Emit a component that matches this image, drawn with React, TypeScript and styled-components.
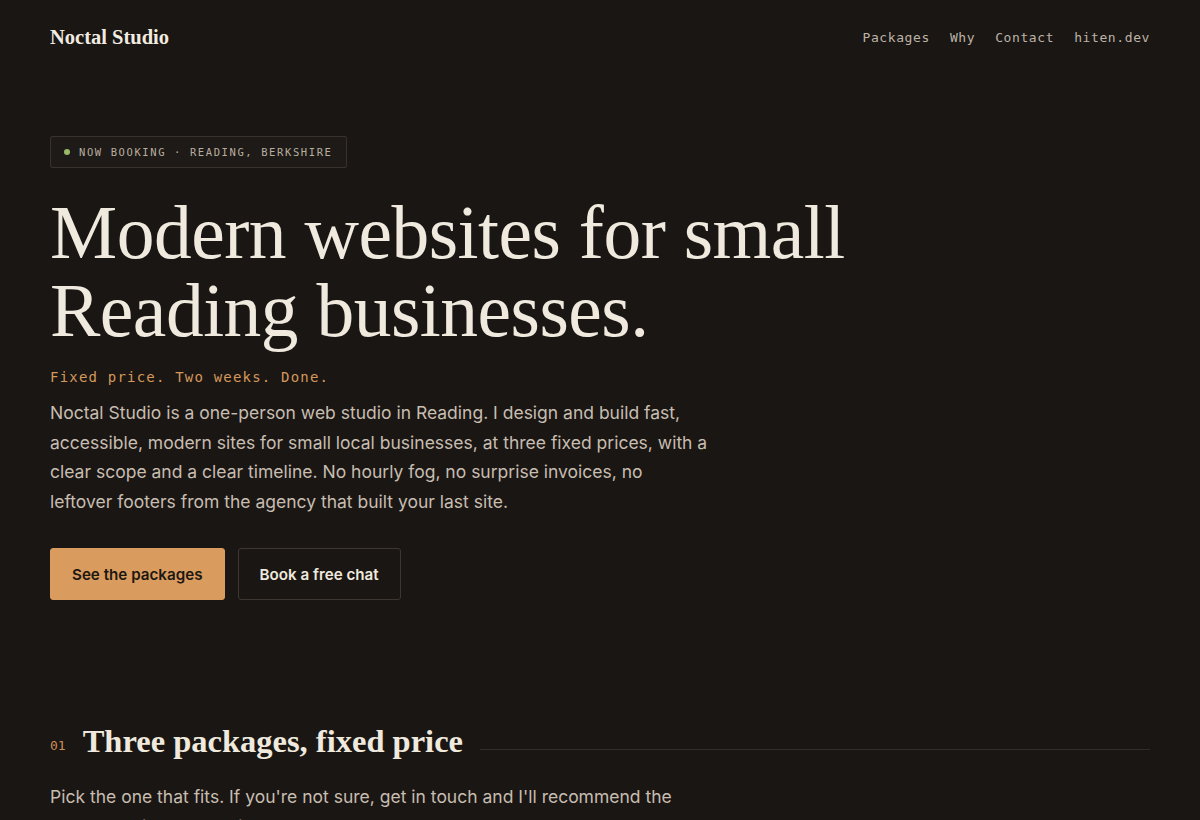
import styled, { createGlobalStyle } from "styled-components";

const GlobalStyle = createGlobalStyle`
  html, body {
    margin: 0;
    padding: 0;
    background: #1a1614;
  }
  body {
    font-family: Inter, "Noto Sans", sans-serif;
    color: #ede7dc;
    -webkit-font-smoothing: antialiased;
  }
  * { box-sizing: border-box; }
`;

const mono = `"DejaVu Sans Mono", "Liberation Mono", monospace`;
const serif = `"Liberation Serif", "DejaVu Serif", serif`;

const Page = styled.div`
  max-width: 1100px;
  margin: 0 auto;
  min-height: 820px;
`;

const Header = styled.header`
  display: flex;
  align-items: center;
  justify-content: space-between;
  height: 74px;
`;

const Logo = styled.a`
  font-family: ${serif};
  font-weight: 700;
  font-size: 20.5px;
  color: #f1ebe0;
  text-decoration: none;
`;

const Nav = styled.nav`
  display: flex;
  gap: 20px;
`;

const NavLink = styled.a`
  font-family: ${mono};
  font-size: 13px;
  letter-spacing: 0.6px;
  color: #bdb3a6;
  text-decoration: none;
`;

const Hero = styled.section`
  padding-top: 62px;
  padding-bottom: 123px;
`;

const Badge = styled.div`
  display: inline-flex;
  align-items: center;
  gap: 9px;
  height: 32px;
  padding: 0 13px;
  border: 1px solid #38312c;
  background: #1e1a17;
  border-radius: 2px;
  font-family: ${mono};
  font-size: 10.5px;
  letter-spacing: 1.6px;
  text-transform: uppercase;
  color: #b8ae9f;
`;

const Dot = styled.span`
  width: 6px;
  height: 6px;
  border-radius: 50%;
  background: #9cb86a;
`;

const Title = styled.h1`
  font-family: ${serif};
  font-weight: 400;
  font-size: 75.5px;
  line-height: 78px;
  letter-spacing: -0.5px;
  color: #efe9de;
  margin: 26px 0 19px;
  max-width: 860px;
`;

const Tagline = styled.p`
  font-family: ${mono};
  font-size: 14px;
  letter-spacing: 1.2px;
  color: #d4985a;
  margin: 0 0 13px;
`;

const Lead = styled.p<{ $width?: number }>`
  font-size: 17.5px;
  line-height: 29.5px;
  color: #c7bdb0;
  max-width: ${(p) => p.$width ?? 658}px;
  margin: 0;
`;

const Actions = styled.div`
  display: flex;
  gap: 13px;
  margin-top: 32px;
`;

const Button = styled.a<{ $primary?: boolean }>`
  display: inline-flex;
  align-items: center;
  justify-content: center;
  height: 52px;
  padding: 0 21px;
  border-radius: 3px;
  font-size: 15.2px;
  font-weight: 600;
  text-decoration: none;
  background: ${(p) => (p.$primary ? "#d99c5e" : "transparent")};
  color: ${(p) => (p.$primary ? "#1d1712" : "#efe9de")};
  border: 1px solid ${(p) => (p.$primary ? "#d99c5e" : "#3d3631")};
`;

const SectionHead = styled.div`
  display: flex;
  align-items: center;
  gap: 17px;
`;

const SectionNum = styled.span`
  font-family: ${mono};
  font-size: 13px;
  color: #c98e58;
  padding-top: 8px;
`;

const SectionTitle = styled.h2`
  font-family: ${serif};
  font-weight: 700;
  font-size: 32.5px;
  color: #efe9de;
  margin: 0;
  white-space: nowrap;
`;

const Rule = styled.div`
  flex: 1;
  height: 1px;
  background: #332d29;
  margin-top: 16px;
`;

const SectionLead = styled(Lead)`
  margin-top: 22px;
`;

export default function App() {
  return (
    <>
      <GlobalStyle />
      <Page>
        <Header>
          <Logo href="#">Noctal Studio</Logo>
          <Nav>
            <NavLink href="#packages">Packages</NavLink>
            <NavLink href="#why">Why</NavLink>
            <NavLink href="#contact">Contact</NavLink>
            <NavLink href="#">hiten.dev</NavLink>
          </Nav>
        </Header>
        <Hero>
          <Badge>
            <Dot />
            Now booking · Reading, Berkshire
          </Badge>
          <Title>Modern websites for small Reading businesses.</Title>
          <Tagline>Fixed price. Two weeks. Done.</Tagline>
          <Lead>
            Noctal Studio is a one-person web studio in Reading. I design and
            build fast, accessible, modern sites for small local businesses, at
            three fixed prices, with a clear scope and a clear timeline. No
            hourly fog, no surprise invoices, no leftover footers from the
            agency that built your last site.
          </Lead>
          <Actions>
            <Button $primary href="#packages">See the packages</Button>
            <Button href="#contact">Book a free chat</Button>
          </Actions>
        </Hero>
        <section id="packages">
          <SectionHead>
            <SectionNum>01</SectionNum>
            <SectionTitle>Three packages, fixed price</SectionTitle>
            <Rule />
          </SectionHead>
          <SectionLead $width={640}>
            Pick the one that fits. If you're not sure, get in touch and I'll
            recommend the one that suits your business.
          </SectionLead>
        </section>
      </Page>
    </>
  );
}
